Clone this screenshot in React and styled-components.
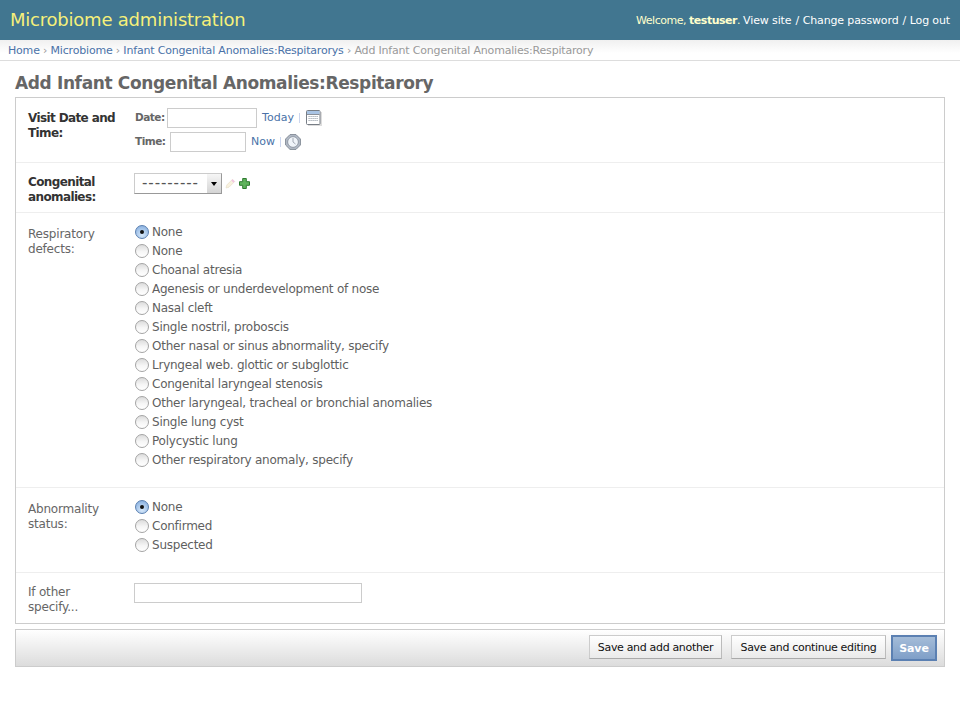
import React from "react";
import styled, { createGlobalStyle } from "styled-components";

const Global = createGlobalStyle`
  html, body { margin: 0; padding: 0; background: #fff; }
  body { font-family: "DejaVu Sans", "Liberation Sans", sans-serif; font-size: 12px; color: #333; }
`;
const Header = styled.header`
  height: 40px; background: #417690; display: flex; align-items: center; justify-content: space-between;
  padding: 0 10px; box-sizing: border-box;
`;
const Brand = styled.h1`
  margin: 0; font-size: 18px; font-weight: 400; color: #f5f07a; letter-spacing: -0.22px; position: relative; top: -1px;
`;
const Tools = styled.div`
  font-size: 11px; color: #ffc; letter-spacing: -0.48px;
  b { font-weight: 700; }
`;
const ToolLink = styled.a`color: #fff; text-decoration: none; letter-spacing: -0.13px;`;
const ToolSep = styled.span`color: #fff; margin: 0 4px;`;
const Crumbs = styled.nav`
  height: 21px; box-sizing: border-box; padding: 4px 8px 0; font-size: 11px; line-height: 14px; color: #999;
  background: linear-gradient(#f0f0f0, #fff 65%); border-bottom: 1px solid #ddd; letter-spacing: -0.19px; white-space: nowrap;
`;
const Crumb = styled.a`text-decoration: none; color: #4a72a8;`;
const Main = styled.main`padding: 0 15px;`;
const Title = styled.h2`
  margin: 0; padding-top: 11px; height: 36px; box-sizing: border-box; font-size: 17px; line-height: 22px; font-weight: 700; color: #666; letter-spacing: -0.37px; white-space: nowrap;
`;
const Fieldset = styled.div`border: 1px solid #ccc; display: flex; flex-direction: column;`;
const Row = styled.div`
  display: flex; height: ${p => p.$h}px; box-sizing: border-box; padding: ${p => p.$pt ?? 10}px 13px 0 12px;
  border-bottom: ${p => (p.$last ? "none" : "1px solid #eee")};
`;
const Label = styled.div`
  width: 106px; flex: none; font-size: 12px; line-height: 15px; color: ${p => (p.$req ? "#333" : "#666")};
  font-weight: ${p => (p.$req ? 700 : 400)}; letter-spacing: ${p => (p.$req ? "-0.62px" : "-0.2px")}; padding-top: ${p => p.$pt ?? 0}px;
`;
const Field = styled.div`display: flex; flex-direction: column;`;
const DateRow = styled.div`display: flex; align-items: center; height: 20px; margin-bottom: 4px; font-size: 11px;`;
const DateLabel = styled.span`
  width: ${p => p.$w}px; flex: none; box-sizing: border-box; padding: 0 0 2px 1px; font-size: 10.5px; font-weight: 700; color: #666; letter-spacing: -0.5px;
`;
const TextInput = styled.input`
  display: block; box-sizing: border-box; width: ${p => p.$w}px; height: 20px; padding: 0; border: 1px solid #ccc; background: #fff; outline: none;
`;
const ShortLink = styled.a`color: #4a72a8; text-decoration: none; margin-left: 5px; padding-bottom: 2px; letter-spacing: 0.05px;`;
const Pipe = styled.span`width: 1px; height: 10px; background: #ccd6ee; margin: 0 ${p => p.$mr}px 0 5px;`;
const SelectBox = styled.div`
  width: 88px; height: 21px; box-sizing: border-box; border: 1px solid #ccc; border-right: 1px solid #999; border-bottom: 1px solid #999; display: flex; align-items: center; background: #fff;
`;
const SelectText = styled.span`flex: 1; padding-left: 7px; font-size: 15px; line-height: 17px; color: #555; letter-spacing: 0.9px;`;
const SelectArrow = styled.span`
  width: 14px; height: 19px; background: linear-gradient(#f6f6f6, #d4d4d4); display: flex; align-items: center; justify-content: center;
  &::after { content: ""; border-left: 3.5px solid transparent; border-right: 3.5px solid transparent; border-top: 4px solid #000; }
`;
const SelectRow = styled.div`display: flex; align-items: center; gap: 3px;`;
const RadioList = styled.ul`list-style: none; margin: 0; padding: 0;`;
const RadioItem = styled.li`
  height: 19px; display: flex; align-items: center; gap: 3px; font-size: 12px; color: #5f5f5f; letter-spacing: -0.24px; white-space: nowrap;
`;
const RadioDot = styled.span`
  width: 14px; height: 14px; margin-left: 1px; box-sizing: border-box; border-radius: 50%; flex: none; display: flex; align-items: center; justify-content: center;
  border: 1px solid ${p => (p.$on ? "#5a7fb0" : "#a4a4a4")};
  background: ${p => (p.$on ? "radial-gradient(circle at 50% 75%, #d6e8fa, #7fa9dc)" : "linear-gradient(#dcdcdc, #f6f6f6 55%, #fff)")};
  &::after { content: ""; display: ${p => (p.$on ? "block" : "none")}; width: 4px; height: 4px; border-radius: 50%; background: #111; }
`;
const Submit = styled.div`
  margin-top: 5px; height: 38px; box-sizing: border-box; border: 1px solid #ccc; background: linear-gradient(#fff, #dcdcdc);
  display: flex; align-items: flex-start; justify-content: flex-end; padding: 5px 7px 0 0; gap: 5px;
`;
const Btn = styled.button`
  height: 24px; box-sizing: border-box; padding: 0; width: ${p => p.$w}px; margin-left: ${p => p.$ml ?? 0}px; font-family: inherit; font-size: 11px; color: #111; letter-spacing: -0.33px; white-space: nowrap;
  border: 1px solid #ccc; border-bottom-color: #aaa; border-right-color: #bbb; background: linear-gradient(#fff, #eaeaea);
`;
const SaveBtn = styled.button`
  width: 46px; height: 26px; box-sizing: border-box; padding: 0; font-family: inherit; font-size: 11px; font-weight: 700; color: #fff; letter-spacing: -0.1px;
  border: 2px solid #5b80b2; background: linear-gradient(#a4bcd8, #7f9fc8);
`;

const Calendar = () => (
  <svg width="16" height="16" viewBox="0 0 16 16">
    <rect x="2" y="2" width="14" height="14" fill="#ddd" />
    <rect x=".5" y=".5" width="13.5" height="14" rx="1" fill="#fff" stroke="#777d85" />
    <rect x="1" y="1" width="12.5" height="3" fill="#a9c4e4" />
    <path d="M1 4.5h12.5" stroke="#8a9099" />
    <path d="M2.5 6.5h10M2.5 8.5h10M2.5 10.5h10" stroke="#9aa3ad" strokeWidth="1" strokeDasharray="1.2 .8" />
  </svg>
);
const Clock = () => (
  <svg width="16" height="16" viewBox="0 0 16 16">
    <path d="M5 .6h6L15.4 5v6L11 15.4H5L.6 11V5z" fill="#b4bcc8" stroke="#858d98" />
    <circle cx="8" cy="8" r="5.4" fill="#f0f4f9" stroke="#8f97a3" />
    <path d="M8 4v4l2.5 2" fill="none" stroke="#8f97a3" strokeWidth=".8" />
  </svg>
);
const Pencil = () => (
  <svg width="11" height="11" viewBox="0 0 11 11">
    <path d="M1 10l.8-3L7.5 1.3l2.2 2.2L4 9.2z" fill="#f9f2df" stroke="#e8dfca" strokeWidth=".7" />
    <path d="M7.5 1.3l2.2 2.2-1.2 1.2-2.2-2.2z" fill="#f2c4e4" />
  </svg>
);
const Plus = () => (
  <svg width="11" height="11" viewBox="0 0 11 11">
    <path d="M3.7.5h3.6v3.2h3.2v3.6H7.3v3.2H3.7V7.3H.5V3.7h3.2z" fill="#5fb35c" stroke="#2f7a30" />
  </svg>
);

const defects = ["None", "None", "Choanal atresia", "Agenesis or underdevelopment of nose", "Nasal cleft", "Single nostril, proboscis", "Other nasal or sinus abnormality, specify", "Lryngeal web. glottic or subglottic", "Congenital laryngeal stenosis", "Other laryngeal, tracheal or bronchial anomalies", "Single lung cyst", "Polycystic lung", "Other respiratory anomaly, specify"];
const status = ["None", "Confirmed", "Suspected"];

const Radios = ({ items }) => (
  <RadioList>
    {items.map((t, i) => (
      <RadioItem key={i}><RadioDot $on={i === 0} />{t}</RadioItem>
    ))}
  </RadioList>
);

export default function App() {
  return (
    <>
      <Global />
      <Header>
        <Brand>Microbiome administration</Brand>
        <Tools>
          Welcome, <b>testuser</b>. <ToolLink href="#">View site</ToolLink><ToolSep>/</ToolSep><ToolLink href="#">Change password</ToolLink><ToolSep>/</ToolSep><ToolLink href="#">Log out</ToolLink>
        </Tools>
      </Header>
      <Crumbs>
        <Crumb href="#">Home</Crumb> › <Crumb href="#">Microbiome</Crumb> › <Crumb href="#">Infant Congenital Anomalies:Respitarorys</Crumb> › Add Infant Congenital Anomalies:Respitarory
      </Crumbs>
      <Main>
        <Title>Add Infant Congenital Anomalies:Respitarory</Title>
        <Fieldset>
          <Row $h={65} $pt={10}>
            <Label $req $pt={3}>Visit Date and Time:</Label>
            <Field>
              <DateRow>
                <DateLabel $w={33}>Date:</DateLabel><TextInput $w={90} />
                <ShortLink href="#">Today</ShortLink><Pipe $mr={6} /><Calendar />
              </DateRow>
              <DateRow>
                <DateLabel $w={36}>Time:</DateLabel><TextInput $w={76} />
                <ShortLink href="#">Now</ShortLink><Pipe $mr={4} /><Clock />
              </DateRow>
            </Field>
          </Row>
          <Row $h={50} $pt={10}>
            <Label $req $pt={2}>Congenital anomalies:</Label>
            <Field>
              <SelectRow>
                <SelectBox><SelectText>---------</SelectText><SelectArrow /></SelectBox>
                <Pencil /><Plus />
              </SelectRow>
            </Field>
          </Row>
          <Row $h={275} $pt={9}>
            <Label $pt={5}>Respiratory defects:</Label>
            <Field><Radios items={defects} /></Field>
          </Row>
          <Row $h={85} $pt={9}>
            <Label $pt={5}>Abnormality status:</Label>
            <Field><Radios items={status} /></Field>
          </Row>
          <Row $h={50} $pt={10} $last>
            <Label $pt={2}>If other<br />specify...</Label>
            <Field><TextInput $w={228} /></Field>
          </Row>
        </Fieldset>
        <Submit>
          <Btn $w={133}>Save and add another</Btn>
          <Btn $w={155} $ml={4}>Save and continue editing</Btn>
          <SaveBtn>Save</SaveBtn>
        </Submit>
      </Main>
    </>
  );
}
